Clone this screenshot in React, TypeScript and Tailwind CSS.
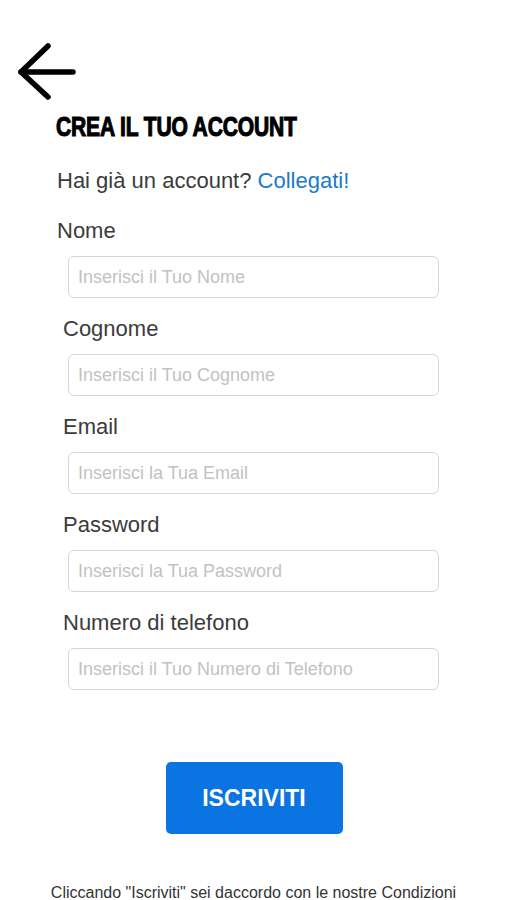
const fields = [
  { label: "Nome", placeholder: "Inserisci il Tuo Nome", indent: "pl-[57px]" },
  { label: "Cognome", placeholder: "Inserisci il Tuo Cognome", indent: "pl-[63px]" },
  { label: "Email", placeholder: "Inserisci la Tua Email", indent: "pl-[63px]" },
  { label: "Password", placeholder: "Inserisci la Tua Password", indent: "pl-[63px]" },
  { label: "Numero di telefono", placeholder: "Inserisci il Tuo Numero di Telefono", indent: "pl-[63px]" },
]

export default function App() {
  return (
    <div className="min-h-screen bg-white font-['Liberation_Sans',Arial,sans-serif] text-[#3b3b3b]">
      <div className="pl-[17px] pt-[42px]">
        <svg width="60" height="58" viewBox="0 0 60 58" fill="none" stroke="#000" strokeWidth="5.5" strokeLinecap="round" strokeLinejoin="round">
          <path d="M4 30 H56" />
          <path d="M31 4 L4 30 L31 55" />
        </svg>
      </div>

      <h1 className="mt-[14px] pl-[56px] text-[27px] leading-none font-bold text-black">
        <span className="inline-block origin-left scale-x-[0.78] tracking-[-0.2px] [-webkit-text-stroke:1.1px_black]">
          CREA IL TUO ACCOUNT
        </span>
      </h1>

      <p className="mt-[29px] pl-[57px] text-[22px] leading-[21px]">
        Hai già un account? <a href="#" className="text-[#1a7bc9]">Collegati!</a>
      </p>

      <form className="mt-[29px] flex flex-col gap-[20px]">
        {fields.map((f) => (
          <div key={f.label} className="flex flex-col gap-[15px]">
            <label className={`${f.indent} text-[22px] leading-[21px]`}>{f.label}</label>
            <div className="pl-[68px]">
              <input
                type="text"
                placeholder={f.placeholder}
                className="w-[371px] h-[42px] rounded-[6px] border border-[#d6d6d6] px-[9px] text-[18px] outline-none placeholder:text-[#c2c2c2]"
              />
            </div>
          </div>
        ))}
      </form>

      <div className="mt-[72px] flex justify-center">
        <button className="ml-[1px] w-[177px] h-[72px] rounded-[5px] bg-[#0a74e2] text-white text-[23px] font-bold">
          ISCRIVITI
        </button>
      </div>

      <p className="mt-[51px] text-center text-[16px] leading-none text-[#333]">
        Cliccando "Iscriviti" sei daccordo con le nostre Condizioni
      </p>
    </div>
  )
}
